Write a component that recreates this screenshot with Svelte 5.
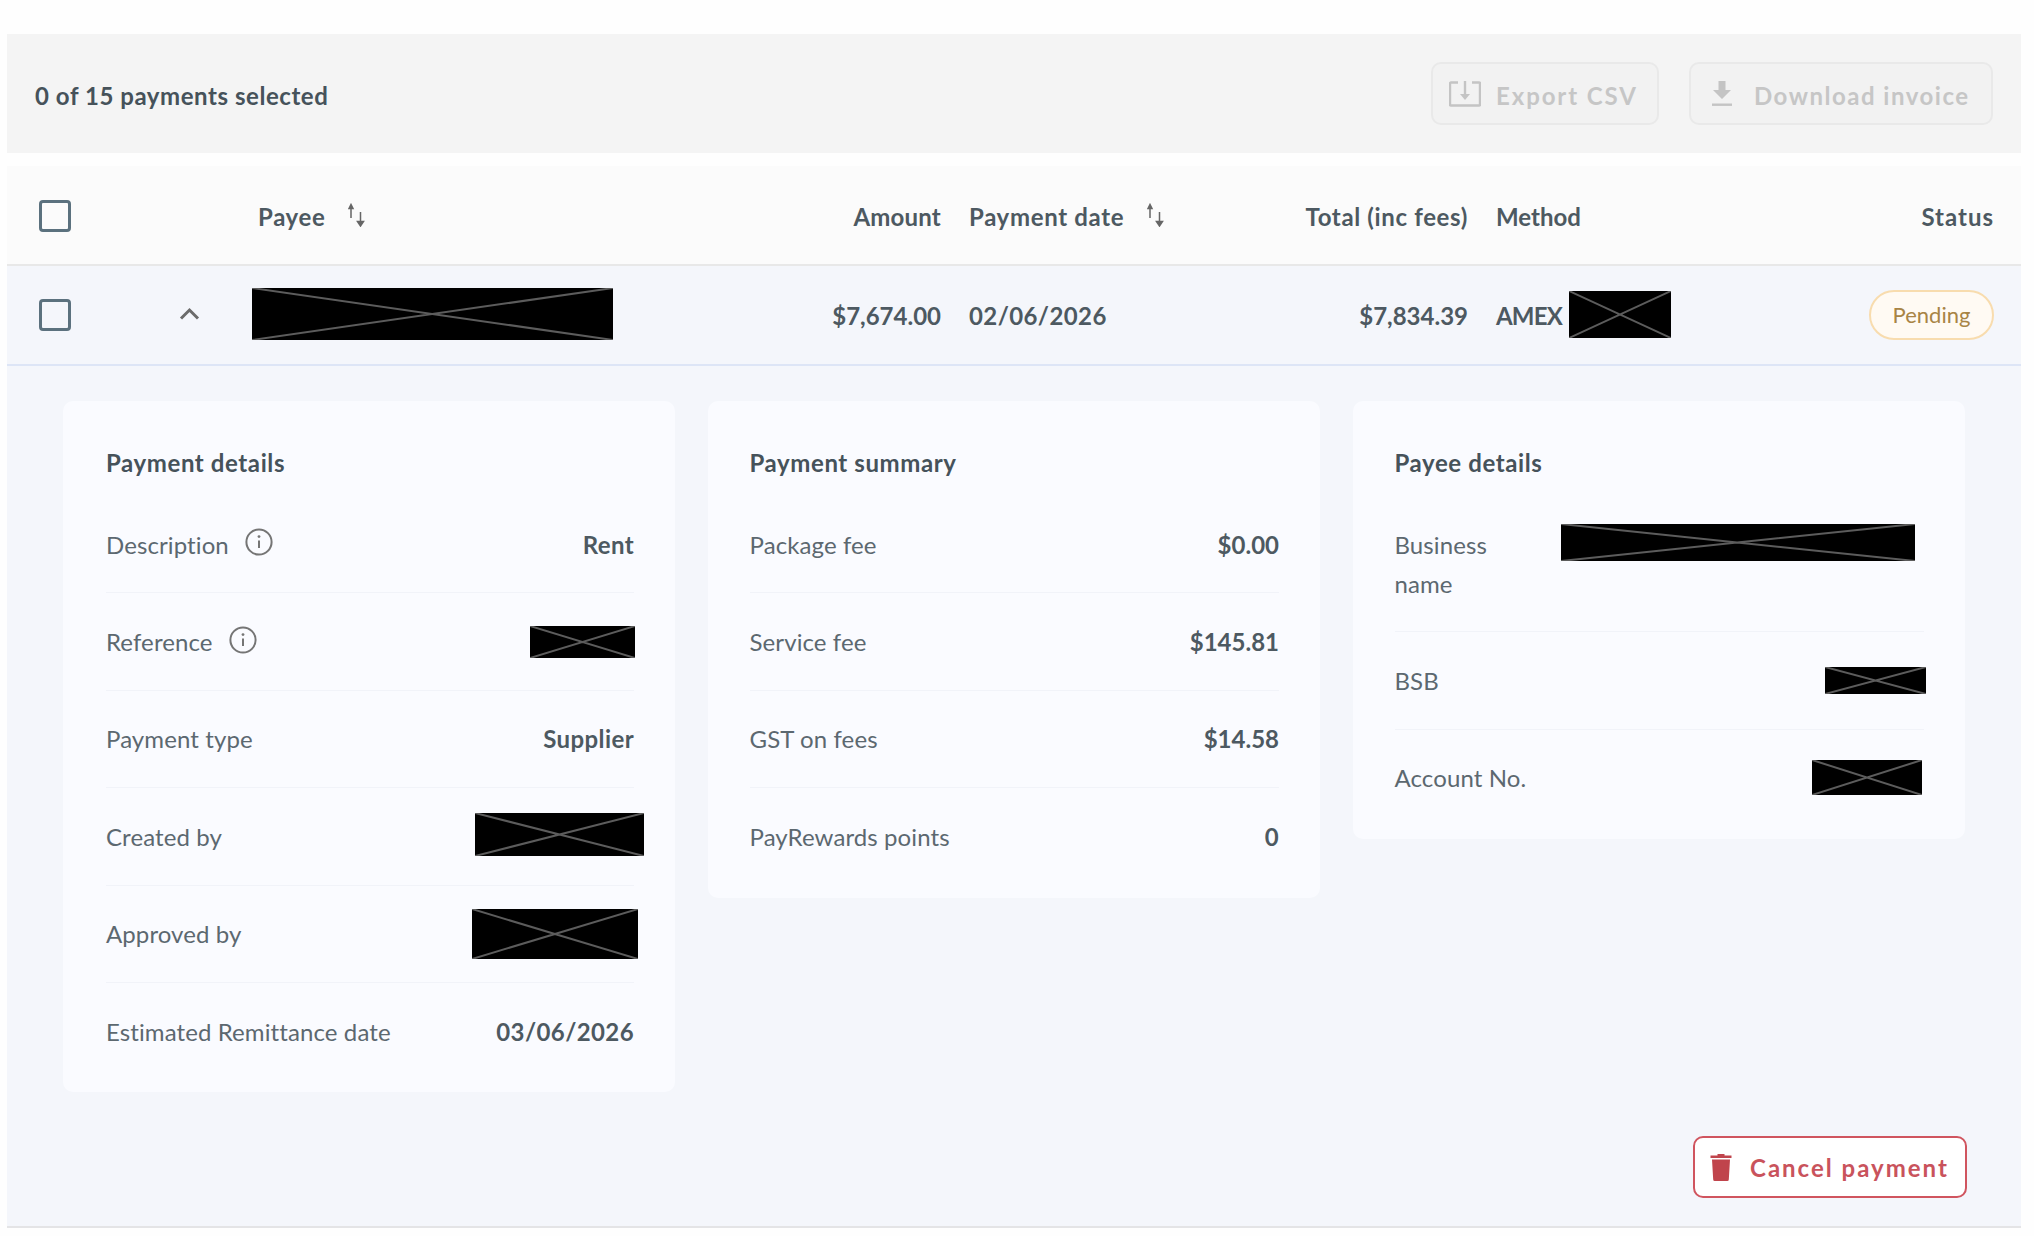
<script>
	const paymentDetails = [
		{ label: 'Description', value: 'Rent', info: true },
		{ label: 'Reference', hidden: 'r-ref', info: true },
		{ label: 'Payment type', value: 'Supplier' },
		{ label: 'Created by', hidden: 'r-created' },
		{ label: 'Approved by', hidden: 'r-approved' },
		{ label: 'Estimated Remittance date', value: '03/06/2026' }
	];

	const paymentSummary = [
		{ label: 'Package fee', value: '$0.00' },
		{ label: 'Service fee', value: '$145.81' },
		{ label: 'GST on fees', value: '$14.58' },
		{ label: 'PayRewards points', value: '0' }
	];

	const payeeDetails = [
		{ label: 'Business name', hidden: 'r-business', narrow: true },
		{ label: 'BSB', hidden: 'r-bsb' },
		{ label: 'Account No.', hidden: 'r-account' }
	];

	const cards = [
		{ title: 'Payment details', rows: paymentDetails },
		{ title: 'Payment summary', rows: paymentSummary },
		{ title: 'Payee details', rows: payeeDetails }
	];
</script>

{#snippet redact(cls)}
	<svg class="redact {cls}" viewBox="0 0 100 100" preserveAspectRatio="none" aria-hidden="true">
		<rect width="100" height="100" fill="#000" />
		<path d="M0 0L100 100M100 0L0 100" stroke="#5c5c5c" stroke-width="2" vector-effect="non-scaling-stroke" />
	</svg>
{/snippet}

{#snippet sortIcon()}
	<svg class="sort" viewBox="0 0 18 24" aria-hidden="true">
		<path d="M3 15V3M1 5.5L3 1.5L5 5.5Z" stroke="#666" stroke-width="1.5" fill="#666" />
		<path d="M12.5 9V21M9.5 18.5L12.5 23L15.5 18.5Z" stroke="#666" stroke-width="1.5" fill="#666" />
	</svg>
{/snippet}

<div class="page">
	<div class="toolbar">
		<span class="selected">0 of 15 payments selected</span>
		<div class="actions">
			<button class="btn-disabled export" disabled>
				<svg class="ico-export" viewBox="0 0 32 26" aria-hidden="true">
					<path d="M9 1.5H2a1 1 0 0 0-1 1v21a1 1 0 0 0 1 1h28a1 1 0 0 0 1-1v-21a1 1 0 0 0-1-1h-7" fill="none" stroke="#c4c4c4" stroke-width="2.4" />
					<path d="M16 0V15" stroke="#c4c4c4" stroke-width="2.4" />
					<path d="M11 13H21L16 19Z" fill="#c4c4c4" />
				</svg>
				<span>Export CSV</span>
			</button>
			<button class="btn-disabled download" disabled>
				<svg class="ico-download" viewBox="0 0 20 25" aria-hidden="true">
					<path d="M6.5 0H13.5V9H19L10 18L1 9H6.5Z" fill="#c4c4c4" />
					<rect x="0" y="22.5" width="20" height="2.4" fill="#c4c4c4" />
				</svg>
				<span>Download invoice</span>
			</button>
		</div>
	</div>

	<div class="grid head">
		<span class="check"></span>
		<span></span>
		<span class="th payee-th">Payee {@render sortIcon()}</span>
		<span class="th right tight">Amount</span>
		<span class="th">Payment date {@render sortIcon()}</span>
		<span class="th right">Total (inc fees)</span>
		<span class="th plain">Method</span>
		<span class="th right wide">Status</span>
	</div>

	<div class="grid row-main">
		<span class="check"></span>
		<svg class="chevron" viewBox="0 0 21 13" aria-hidden="true">
			<path d="M2 11.5L10.5 3L19 11.5" fill="none" stroke="#6b6b6b" stroke-width="3" />
		</svg>
		<span>{@render redact('r-payee')}</span>
		<span class="td right">$7,674.00</span>
		<span class="td date">02/06/2026</span>
		<span class="td right">$7,834.39</span>
		<span class="td method"><span class="amex">AMEX</span> {@render redact('r-card')}</span>
		<span class="right"><span class="pill">Pending</span></span>
	</div>

	<div class="panel">
		<div class="cards">
			{#each cards as card}
				<section class="card">
					<h3>{card.title}</h3>
					{#each card.rows as row}
						<div class="line">
							<span class="label" class:narrow={row.narrow}>
								{row.label}
								{#if row.info}
									<svg class="info" viewBox="0 0 28 28" aria-hidden="true">
										<circle cx="14" cy="14" r="12.6" fill="none" stroke="#757575" stroke-width="2" />
										<circle cx="14" cy="8.6" r="1.4" fill="#757575" />
										<path d="M14 12.5V20" stroke="#757575" stroke-width="2" />
									</svg>
								{/if}
							</span>
							{#if row.hidden}
								<span class="value">{@render redact(row.hidden)}</span>
							{:else}
								<span class="value" class:money={row.value.startsWith('$')}>{row.value}</span>
							{/if}
						</div>
					{/each}
				</section>
			{/each}
		</div>

		<div class="foot">
			<button class="cancel">
				<svg class="ico-trash" viewBox="0 0 22 28" aria-hidden="true">
					<path d="M7.5 2.4V1h7v1.4H21.5V5H.5V2.4Z" fill="#c0444c" />
					<path d="M2 6.5H20L18.8 26.5A1.5 1.5 0 0 1 17.3 28H4.7A1.5 1.5 0 0 1 3.2 26.5Z" fill="#c0444c" />
				</svg>
				<span>Cancel payment</span>
			</button>
		</div>
	</div>
</div>

<style>
	:global(body) {
		background: #fefefe;
	}

	.page {
		padding: 34px 13px 0 7px;
		height: 1202px;
		font-family: Lato, 'Liberation Sans', sans-serif;
		font-size: 24px;
		line-height: 39px;
		color: #5c6870;
	}

	.toolbar {
		display: flex;
		align-items: center;
		justify-content: space-between;
		height: 119px;
		padding: 0 28px;
		background: #f4f4f4;
	}

	.selected {
		padding-top: 3px;
		font-weight: 700;
		letter-spacing: 0.55px;
		color: #46525a;
	}

	.actions {
		display: flex;
		gap: 30px;
	}

	button {
		display: flex;
		align-items: center;
		font-family: inherit;
		font-size: 24px;
		font-weight: 700;
		letter-spacing: 1.5px;
		background: none;
	}

	.btn-disabled span {
		padding-top: 4px;
	}

	.btn-disabled {
		height: 63px;
		border: 2px solid #e9e9e9;
		border-radius: 10px;
		background: #f2f2f2;
		color: #c6c6c6;
	}

	.export {
		width: 228px;
		padding: 0 0 0 16px;
		gap: 15px;
		letter-spacing: 1.9px;
	}

	.download {
		width: 304px;
		padding: 0 0 0 21px;
		gap: 22px;
	}

	.ico-export {
		width: 32px;
		height: 26px;
	}

	.ico-download {
		width: 20px;
		height: 25px;
	}

	.grid {
		display: grid;
		grid-template-columns: 111px 45px 501px 160px 271px 200px 270px 200px;
		column-gap: 28px;
		align-items: center;
		padding: 0 27px 0 33px;
	}

	.head {
		height: 96px;
		margin-top: 13px;
		padding-top: 2px;
		background: #fbfbfb;
		border-bottom: 2px solid #e8e8e8;
	}

	.row-main {
		height: 98px;
		background: #f4f6fb;
		border-bottom: 2px solid #dde5f6;
	}

	.check {
		display: block;
		box-sizing: border-box;
		width: 32px;
		height: 32px;
		margin-left: -1px;
		border: 3px solid #5b717e;
		border-radius: 4px;
	}

	.chevron {
		display: block;
		width: 21px;
		height: 13px;
		margin-top: -3px;
	}

	.th {
		display: flex;
		align-items: center;
		font-weight: 700;
		letter-spacing: 0.65px;
		color: #4d5961;
	}

	.th.right {
		justify-content: flex-end;
	}

	.th.tight {
		letter-spacing: 0.2px;
	}

	.th.plain {
		letter-spacing: 0;
	}

	.th.wide {
		letter-spacing: 1px;
	}

	.payee-th {
		padding-left: 6px;
	}

	.sort {
		width: 18px;
		height: 24px;
		margin: -2px 0 0 23px;
	}

	.td {
		font-weight: 700;
		color: #4d5961;
	}

	.td.date {
		letter-spacing: 0.4px;
	}

	.right {
		text-align: right;
	}

	.method {
		display: flex;
		align-items: center;
		gap: 7px;
	}

	.amex {
		letter-spacing: -0.8px;
	}

	.pill {
		display: inline-block;
		box-sizing: border-box;
		width: 125px;
		height: 50px;
		line-height: 46px;
		text-align: center;
		font-size: 22px;
		color: #a88445;
		background: #fffaf3;
		border: 2px solid #f8dcae;
		border-radius: 25px;
	}

	.panel {
		padding: 35px 56px 0;
		height: 825px;
		background: #f4f6fb;
		border-bottom: 2px solid #e4e4e6;
	}

	.cards {
		display: grid;
		grid-template-columns: repeat(3, 1fr);
		align-items: start;
		gap: 33px;
		height: 735px;
	}

	.card {
		padding: 42px 41px 13px 41.5px;
		background: #fafbff;
		border-radius: 10px;
	}

	.card:first-child {
		padding-left: 43px;
	}

	h3 {
		margin: 0 0 14px;
		font-size: 24px;
		font-weight: 700;
		letter-spacing: 0.6px;
		line-height: 39px;
		color: #46525a;
	}

	.line {
		display: flex;
		justify-content: space-between;
		padding: 28.7px 0;
		border-bottom: 1px solid #f1f3f9;
	}

	.line:last-child {
		border-bottom: none;
	}

	.label {
		display: flex;
		align-items: center;
		letter-spacing: 0.1px;
	}

	.label.narrow {
		width: 120px;
	}

	.info {
		width: 28px;
		height: 28px;
		margin: -4px 0 0 16px;
	}

	.value {
		display: flex;
		align-items: center;
		height: 39px;
		font-weight: 700;
		letter-spacing: 0.4px;
		color: #4d5961;
	}

	.value.money {
		letter-spacing: 0;
	}

	.redact {
		display: block;
		flex-shrink: 0;
	}

	.r-payee { width: 361px; height: 52px; margin-top: -3px; }
	.r-card { width: 102px; height: 47px; margin-top: -1px; }
	.r-ref { width: 105px; height: 32px; margin-right: -1px; }
	.r-created { width: 169px; height: 43px; margin: -4px -10px 0 0; }
	.r-approved { width: 166px; height: 50px; margin-right: -4px; }
	.r-business { width: 354px; height: 37px; margin: -3px 9px 0 0; }
	.r-bsb { width: 101px; height: 27px; margin-right: -2px; }
	.r-account { width: 110px; height: 35px; margin-right: 2px; }

	.foot {
		display: flex;
		justify-content: flex-end;
		margin-right: -2px;
	}

	.cancel {
		box-sizing: border-box;
		width: 274px;
		height: 62px;
		padding: 0 0 0 15px;
		gap: 18px;
		letter-spacing: 2px;
		color: #c9535c;
		background: #fff;
		border: 2px solid #d0555f;
		border-radius: 10px;
	}

	.ico-trash {
		width: 22px;
		height: 28px;
	}
</style>
